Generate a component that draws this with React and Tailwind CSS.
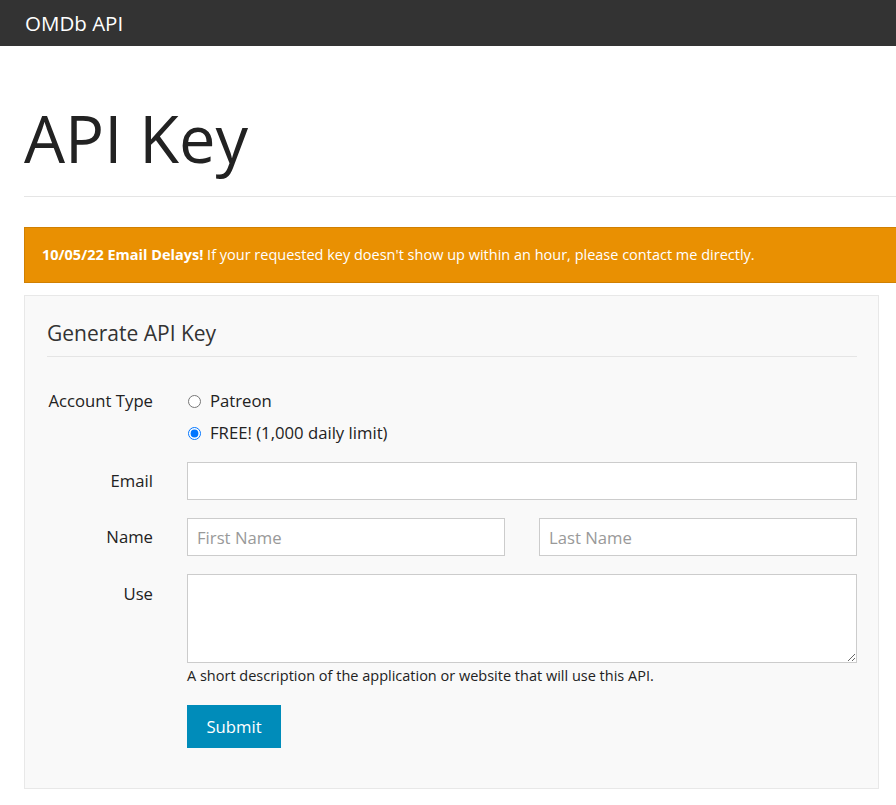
export default function App() {
  return (
    <div className="min-h-screen bg-white text-[#222222] overflow-hidden" style={{ fontFamily: '"Open Sans", "Noto Sans", sans-serif' }}>
      <div className="h-[46px] bg-[#333333] flex items-center pl-[25px]">
        <span className="text-white text-[20.5px] leading-none">OMDb API</span>
      </div>

      <div className="pl-[24px]">
        <h1 className="mt-[54px] text-[65px] leading-[77px] text-[#222222] font-normal">API Key</h1>
        <div className="mt-[19px] border-t border-[#e5e5e5]" />

        <div className="mt-[30px] h-[56px] bg-[#e99002] border border-[#d08002] border-r-0 flex items-center pl-[17px] text-white text-[14.5px]">
          <span>
            <b className="font-bold">10/05/22 Email Delays!</b> If your requested key doesn't show up within an hour, please contact me directly.
          </span>
        </div>

        <div className="mt-[12px] mr-[17px] mb-[16px] bg-[#f9f9f9] border border-[#e8e8e8] pt-[22px] pl-[22px] pr-[21px] pb-[40px] text-[16.7px]">
          <div className="text-[21px] leading-[30px] text-[#333333] pb-[8px] border-b border-[#e5e5e5]">Generate API Key</div>

          <div className="mt-[32px] flex items-start">
            <div className="w-[106px] text-right leading-[24px]">Account Type</div>
            <div className="ml-[34px] flex flex-col gap-[8px]">
              <label className="flex items-center h-[24px]">
                <input type="radio" name="type" className="w-[13px] h-[13px] m-0 ml-[1px]" />
                <span className="ml-[9px]">Patreon</span>
              </label>
              <label className="flex items-center h-[24px]">
                <input type="radio" name="type" defaultChecked className="w-[13px] h-[13px] m-0 ml-[1px]" />
                <span className="ml-[9px]">FREE! (1,000 daily limit)</span>
              </label>
            </div>
          </div>

          <div className="mt-[17px] flex items-center">
            <div className="w-[106px] text-right leading-[24px]">Email</div>
            <input className="ml-[34px] flex-1 h-[38px] bg-white border border-[#cccccc] px-[9px] outline-none" />
          </div>

          <div className="mt-[18px] flex items-center">
            <div className="w-[106px] text-right leading-[24px]">Name</div>
            <div className="ml-[34px] flex-1 grid grid-cols-2 gap-[34px]">
              <input placeholder="First Name" className="h-[38px] bg-white border border-[#cccccc] px-[9px] outline-none placeholder:text-[#999999]" />
              <input placeholder="Last Name" className="h-[38px] bg-white border border-[#cccccc] px-[9px] outline-none placeholder:text-[#999999]" />
            </div>
          </div>

          <div className="mt-[18px] flex items-start">
            <div className="w-[106px] pt-[8px] text-right leading-[24px]">Use</div>
            <div className="ml-[34px] flex-1 flex flex-col">
              <textarea className="h-[89px] bg-white border border-[#cccccc] px-[9px] py-[6px] outline-none block" />
              <div className="mt-[3px] text-[14.5px] leading-[20px] text-[#222222]">A short description of the application or website that will use this API.</div>
              <div className="mt-[19px]">
                <button className="h-[43px] w-[94px] bg-[#008cba] text-white">Submit</button>
              </div>
            </div>
          </div>
        </div>
      </div>
    </div>
  );
}
